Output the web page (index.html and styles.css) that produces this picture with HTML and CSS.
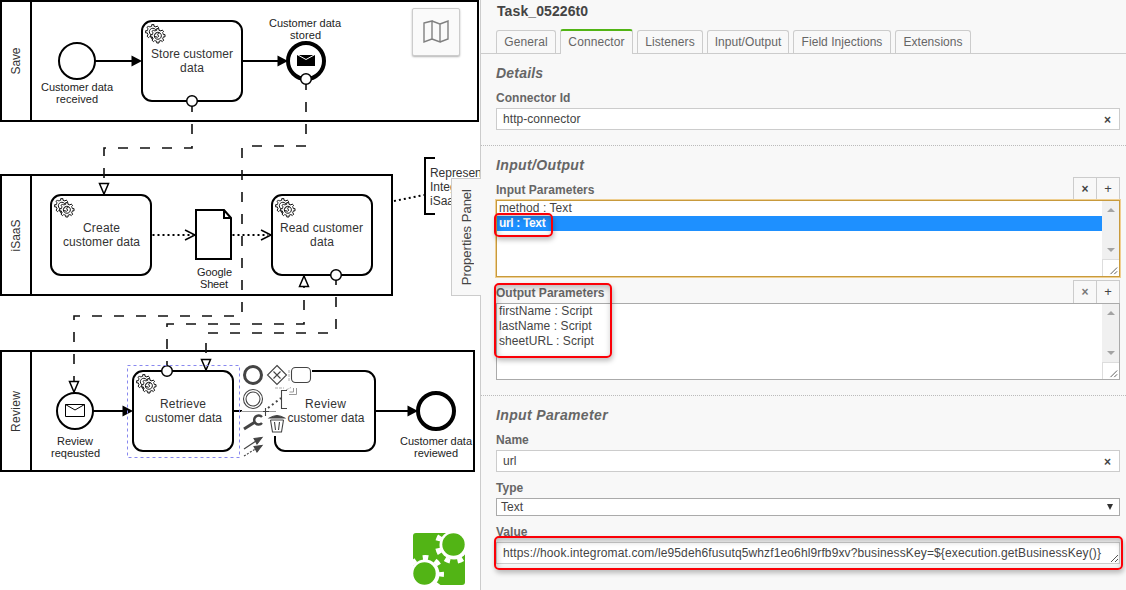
FILE: index.html
```html
<!DOCTYPE html>
<html lang="en">
<head>
<meta charset="utf-8">
<title>Process modeler</title>
<link rel="stylesheet" href="styles.css">
</head>
<body>
<main class="modeler">
<section class="canvas">
<svg class="diagram" width="480" height="590" viewBox="0 0 480 590">
  <defs>
    <g id="gears">
      <path class="gear" d="m 12,18 v -1.71335 c 0.352326,-0.0705 0.703932,-0.17838 1.047628,-0.32133 0.344416,-0.14465 0.665822,-0.32133 0.966377,-0.52145 l 1.19431,1.18005 1.567487,-1.57688 -1.195028,-1.18014 c 0.403376,-0.61394 0.683079,-1.29908 0.825447,-2.01824 l 1.622133,-0.01 v -2.2196 l -1.636514,0.01 c -0.07333,-0.35153 -0.178319,-0.70024 -0.323564,-1.04372 -0.145244,-0.34406 -0.321407,-0.6644 -0.522735,-0.96217 l 1.131035,-1.13631 -1.583305,-1.56293 -1.129598,1.13589 c -0.614052,-0.40108 -1.302883,-0.68093 -2.022633,-0.82247 l 0.0093,-1.61852 h -2.241173 l 0.0042,1.63124 c -0.353763,0.0736 -0.705369,0.17977 -1.049785,0.32371 -0.344415,0.14437 -0.665102,0.32092 -0.9635006,0.52006 l -1.1698628,-1.15823 -1.5667691,1.5792 1.1684265,1.15669 c -0.4026573,0.61283 -0.68308,1.29797 -0.8247287,2.01713 l -1.6588041,0.003 v 2.22174 l 1.6724648,-0.006 c 0.073327,0.35077 0.1797598,0.70243 0.3242851,1.04472 0.1452428,0.34448 0.3214064,0.6644 0.5227339,0.96066 l -1.1993431,1.19723 1.5840256,1.56011 1.1964668,-1.19348 c 0.6140517,0.40346 1.3028827,0.68232 2.0233517,0.82331 l 7.19e-4,1.69892 h 2.226848 z m 0.221462,-3.9957 c -1.788948,0.7502 -3.8576,-0.0928 -4.6097055,-1.87438 -0.7521065,-1.78321 0.090598,-3.84627 1.8802645,-4.59604 1.78823,-0.74936 3.856881,0.0929 4.608987,1.87437 0.752106,1.78165 -0.0906,3.84612 -1.879546,4.59605 z"/>
      <path class="gear" d="m 17,22 v -1.71335 c 0.352326,-0.0705 0.703932,-0.17838 1.047628,-0.32133 0.344416,-0.14465 0.665822,-0.32133 0.966377,-0.52145 l 1.19431,1.18005 1.567487,-1.57688 -1.195028,-1.18014 c 0.403376,-0.61394 0.683079,-1.29908 0.825447,-2.01824 l 1.622133,-0.01 v -2.2196 l -1.636514,0.01 c -0.07333,-0.35153 -0.178319,-0.70024 -0.323564,-1.04372 -0.145244,-0.34406 -0.321407,-0.6644 -0.522735,-0.96217 l 1.131035,-1.13631 -1.583305,-1.56293 -1.129598,1.13589 c -0.614052,-0.40108 -1.302883,-0.68093 -2.022633,-0.82247 l 0.0093,-1.61852 h -2.241173 l 0.0042,1.63124 c -0.353763,0.0736 -0.705369,0.17977 -1.049785,0.32371 -0.344415,0.14437 -0.665102,0.32092 -0.9635006,0.52006 l -1.1698628,-1.15823 -1.5667691,1.5792 1.1684265,1.15669 c -0.4026573,0.61283 -0.68308,1.29797 -0.8247287,2.01713 l -1.6588041,0.003 v 2.22174 l 1.6724648,-0.006 c 0.073327,0.35077 0.1797598,0.70243 0.3242851,1.04472 0.1452428,0.34448 0.3214064,0.6644 0.5227339,0.96066 l -1.1993431,1.19723 1.5840256,1.56011 1.1964668,-1.19348 c 0.6140517,0.40346 1.3028827,0.68232 2.0233517,0.82331 l 7.19e-4,1.69892 h 2.226848 z m 0.221462,-3.9957 c -1.788948,0.7502 -3.8576,-0.0928 -4.6097055,-1.87438 -0.7521065,-1.78321 0.090598,-3.84627 1.8802645,-4.59604 1.78823,-0.74936 3.856881,0.0929 4.608987,1.87437 0.752106,1.78165 -0.0906,3.84612 -1.879546,4.59605 z"/>
    </g>
  </defs>

  <!-- pools -->
  <g class="shape">
    <path d="M1 1H478V121H1ZM31 1V121"/>
    <path d="M1 175H392V295H1ZM31 175V295"/>
    <path d="M1 351H474V471H1ZM31 351V471"/>
  </g>
  <text class="task-text" transform="translate(20 61) rotate(-90)" textLength="27">Save</text>
  <text class="task-text" transform="translate(20 235.500) rotate(-90)" textLength="32">iSaaS</text>
  <text class="task-text" transform="translate(20 411.500) rotate(-90)" textLength="41">Review</text>

  <!-- tasks -->
  <g class="shape">
    <rect x="142" y="21" width="100" height="80" rx="10"/>
    <rect x="51" y="195" width="100" height="80" rx="10"/>
    <rect x="272" y="195" width="100" height="80" rx="10"/>
    <rect x="133" y="371" width="100" height="80" rx="10"/>
    <path d="M312 371H365a10 10 0 0 1 10 10V441a10 10 0 0 1 -10 10H285a10 10 0 0 1 -10 -10V436"/>
  </g>
  <use href="#gears" x="142" y="21"/>
  <use href="#gears" x="51" y="195"/>
  <use href="#gears" x="272" y="195"/>
  <use href="#gears" x="133" y="371"/>
  <g class="task-text">
    <text x="192" y="58" textLength="82">Store customer</text><text x="192" y="72" textLength="24">data</text>
    <text x="101.500" y="232" textLength="37">Create</text><text x="101.500" y="246" textLength="77">customer data</text>
    <text x="321.500" y="232" textLength="83">Read customer</text><text x="322" y="246" textLength="24">data</text>
    <text x="183" y="408" textLength="46">Retrieve</text><text x="183.500" y="422" textLength="77">customer data</text>
    <text x="325.500" y="408" textLength="41">Review</text><text x="326" y="422" textLength="77">customer data</text>
  </g>

  <!-- events -->
  <g class="shape">
    <circle cx="77" cy="61" r="18"/>
    <circle class="end" cx="306" cy="61" r="18"/>
    <circle cx="75" cy="411" r="18"/>
    <circle class="end" cx="436" cy="411" r="18"/>
  </g>
  <path d="M297 55H315V66H297Z"/>
  <path class="white-line" d="M297 54.500L306 59.500L315 54.500"/>
  <path class="thin" d="M65.500 404.500H84.500V416.500H65.500ZM65.500 404.500L75 410L84.500 404.500"/>
  <g class="label-text">
    <text x="77" y="91" textLength="72">Customer data</text><text x="77" y="103" textLength="42">received</text>
    <text x="305" y="27" textLength="72">Customer data</text><text x="305.500" y="39" textLength="31">stored</text>
    <text x="214.500" y="276" textLength="35">Google</text><text x="214" y="288" textLength="28">Sheet</text>
    <text x="75" y="445" textLength="36">Review</text><text x="75.500" y="457" textLength="49">reqeusted</text>
    <text x="436" y="445" textLength="72">Customer data</text><text x="436" y="457" textLength="44">reviewed</text>
  </g>

  <!-- sequence flows -->
  <path class="flow" d="M95 61H134M243 61H280M93 411H125M234 411H242M375 411H410"/>
  <path d="M131.500 55.500L142 61L131.500 66.500ZM277.500 55.500L288 61L277.500 66.500ZM122.500 405.500L133 411L122.500 416.500ZM407.500 405.500L418 411L407.500 416.500Z"/>

  <!-- data object and associations -->
  <path class="shape" d="M196 210H224L231 218V259H196ZM224 210V218H231"/>
  <path class="dotted" d="M152.500 235H193M232.500 235H268M394 201L424 195"/>
  <path class="flow arrow" d="M185 230L195 235L185 240M261 230L271 235L261 240"/>
  <path class="shape open" d="M435 158H425V214H435"/>
  <g class="task-text note">
    <text x="430" y="177" textLength="61">Represents</text><text x="430" y="191">Integromat</text><text x="430" y="205">iSaaS</text>
  </g>

  <!-- message flows -->
  <g class="message">
    <path d="M192 102V148H104V185"/>
    <path d="M306 80V146H242V316H74V381"/>
    <path d="M167 371V324H304V286"/>
    <path d="M336 275V333H206V360"/>
  </g>
  <g class="thin marker">
    <path d="M99.500 183.500H108.500L104 194ZM69.500 381.500H78.500L74 392ZM201.500 359.500H210.500L206 370ZM299.500 286.500H308.500L304 276Z"/>
    <circle cx="192" cy="101" r="5.300"/><circle cx="306" cy="79" r="5.300"/>
    <circle cx="167" cy="371" r="5.300"/><circle cx="336" cy="275" r="5.300"/>
  </g>
  <rect class="selection" x="127.500" y="365.500" width="112" height="92"/>

  <!-- context pad -->
  <g class="pad">
    <circle class="heavy" cx="253" cy="375" r="8.500"/>
    <circle cx="253" cy="399" r="9.500"/><circle cx="253" cy="399" r="7"/>
    <path d="M277 365.500L286.500 375L277 384.500L267.500 375ZM273.500 371.500L280.500 378.500M280.500 371.500L273.500 378.500"/>
    <rect x="291.500" y="367.500" width="19" height="15" rx="4"/>
    <path class="faint stub" d="M289 370V381M275 388H284M286 390L291 387.500"/>
    <path class="faint" d="M289 394.500H296.500V388M289.500 392H293.500V388"/>
    <path d="M287 390.500H281.500V408.500H287"/>
    <path class="pad-dots" d="M268 408L281 398"/>
    <path class="faint" d="M241 411.500H276"/><path d="M263 411.500H269M265.500 408V416"/>
    <path class="wrench" d="M244 429L255 422"/>
    <path class="wrench-head" d="M262 417A4.500 4.500 0 1 0 262 423"/>
    <path class="trash-lid" d="M269.500 418Q277 413 284.500 418Z"/>
    <path d="M270.500 420H283.500M270.500 420L272.500 432H281.500L283.500 420M274.500 422L275.500 430M279.500 422L278.500 430"/>
    <path d="M244 449L256 441"/><path class="dash" d="M244 456L257 448"/>
    <path class="solid" d="M254 438.500L262 437.500L257 444ZM254 446.500L262 445.500L257 452Z"/>
  </g>

  <!-- product mark -->
  <rect class="green" x="413" y="533" width="52" height="52" rx="3"/>
  <path class="white" d="M454 532H466V545H454ZM412 574H425V586H412Z"/>
  <circle class="white" cx="454" cy="545" r="14.500"/><circle class="white" cx="425" cy="574" r="14.500"/>
  <circle class="teeth" cx="454" cy="545" r="16.500" transform="rotate(22.500 454 545)"/>
  <circle class="teeth" cx="425" cy="574" r="16.500"/>
  <circle class="green" cx="453.500" cy="544.500" r="11.200"/><circle class="green" cx="424.500" cy="573.500" r="11.200"/>
</svg>
<button class="map-toggle" aria-label="Toggle minimap">
  <svg width="28" height="26" viewBox="0 0 28 26"><path d="M2 4L10 2V20L2 23ZM10 2L18 5V23L10 20M18 5L26 2V20L18 23"/></svg>
</button>
<div class="panel-toggle"><span>Properties Panel</span></div>
</section>

<aside class="panel">
  <h1 class="title">Task_05226t0</h1>
  <nav class="tabs">
    <a class="tab general">General</a><a class="tab connector active">Connector</a><a class="tab listeners">Listeners</a><a class="tab io">Input/Output</a><a class="tab fields">Field Injections</a><a class="tab extensions">Extensions</a>
  </nav>

  <section class="group details">
    <h2>Details</h2>
    <label>Connector Id</label>
    <div class="field"><span>http-connector</span><b class="clear">×</b></div>
  </section>

  <section class="group params">
    <h2>Input/Output</h2>
    <div class="list-head"><label>Input Parameters</label><div class="buttons"><b>×</b><b class="plus">+</b></div></div>
    <div class="list focused">
      <ul><li>method : Text</li><li class="selected">url : Text</li></ul>
      <div class="scroll"><i class="up"></i><i class="down"></i><svg class="grip" width="17" height="17" viewBox="0 0 17 17"><path d="M8 15L15 8M12 15L15 12"/></svg></div>
    </div>
    <div class="list-head second"><label>Output Parameters</label><div class="buttons"><b class="muted">×</b><b class="plus">+</b></div></div>
    <div class="list">
      <ul><li>firstName : Script</li><li>lastName : Script</li><li>sheetURL : Script</li></ul>
      <div class="scroll"><i class="up"></i><i class="down"></i><svg class="grip" width="17" height="17" viewBox="0 0 17 17"><path d="M8 15L15 8M12 15L15 12"/></svg></div>
    </div>
  </section>

  <section class="group parameter">
    <h2>Input Parameter</h2>
    <label>Name</label>
    <div class="field"><span>url</span><b class="clear">×</b></div>
    <label>Type</label>
    <div class="field select"><span>Text</span><i class="caret"></i></div>
    <label>Value</label>
    <div class="field value"><span>https://hook.integromat.com/le95deh6fusutq5whzf1eo6hl9rfb9xv?businessKey=${execution.getBusinessKey()}</span><svg class="grip" width="10" height="10" viewBox="0 0 10 10"><path d="M2 9L9 2M6 9L9 6"/></svg></div>
  </section>
  <div class="mark mark-url"></div>
  <div class="mark mark-output"></div>
  <div class="mark mark-value"></div>
</aside>
</main>
</body>
</html>
```
FILE: styles.css
```css
* { box-sizing: border-box; }
body { margin: 0; font: 12px/14px "Liberation Sans", Arial, sans-serif; color: #444; background: #fff; overflow: hidden; }
.modeler { display: flex; width: 1126px; height: 590px; }

.canvas { position: relative; width: 480px; flex: none; }
.diagram { display: block; }
.shape { fill: #fff; stroke: #000; stroke-width: 2; }
.shape .end { stroke-width: 4; }
.open { fill: none; }
.gear { fill: #fff; stroke: #111; stroke-width: 1; }
.thin { fill: #fff; stroke: #000; stroke-width: 1; }
.marker { stroke-width: 1.5; }
.white-line { fill: none; stroke: #fff; stroke-width: 1; }
.flow { fill: none; stroke: #000; stroke-width: 2; }
.arrow { stroke-width: 1.5; }
.dotted { fill: none; stroke: #000; stroke-width: 2; stroke-dasharray: 2 3; }
.message { fill: none; stroke: #111; stroke-width: 1.6; stroke-dasharray: 10 12; }
.task-text { font-size: 12px; text-anchor: middle; fill: #333; }
.label-text { font-size: 11px; text-anchor: middle; fill: #222; }
.note { text-anchor: start; }
.selection { fill: none; stroke: #8888ef; stroke-width: 1; stroke-dasharray: 3 3; }
.pad { fill: none; stroke: #444; stroke-width: 1.1; }
.pad .heavy { stroke-width: 3; }
.pad .faint { stroke: #999; stroke-width: 1; }
.pad .stub { stroke: #aaa; stroke-dasharray: 3 1; }
.pad .pad-dots { stroke-width: 2; stroke-dasharray: 2 3; }
.pad .wrench { stroke-width: 3; }
.pad .wrench-head { stroke-width: 2.5; }
.pad .trash-lid, .pad .solid { fill: #444; }
.pad .dash { stroke-dasharray: 2 1.5; }
.green { fill: #52b415; }
.white { fill: #fff; }
.teeth { fill: none; stroke: #fff; stroke-width: 5; stroke-dasharray: 5.6 7.359; stroke-dashoffset: 2.8; }

.map-toggle { position: absolute; left: 412px; top: 8px; width: 48px; height: 48px; padding: 2px 0 0 0; border: 1px solid #ccc; border-radius: 2px; background: #fafafa; box-shadow: 0 1px 2px rgba(0,0,0,.3); }
.map-toggle svg { fill: none; stroke: #808080; stroke-width: 1.4; }
.panel-toggle { position: absolute; left: 451px; top: 178px; width: 30px; height: 118px; display: flex; align-items: center; justify-content: center; background: #f8f8f8; border: 1px solid #ccc; border-right: 0; z-index: 2; }
.panel-toggle span { writing-mode: vertical-rl; transform: rotate(180deg); font-size: 13px; white-space: nowrap; }

.panel { position: relative; width: 646px; height: 590px; background: #f8f8f8; border-left: 1px solid #ccc; display: flex; flex-direction: column; }
.title { margin: 0; padding: 3px 0 0 16px; height: 29px; font-size: 14px; line-height: 16px; letter-spacing: .1px; }
.tabs { display: flex; align-items: flex-end; gap: 4px; height: 25px; padding-left: 15px; border-bottom: 1px solid #ccc; }
.tab { height: 23px; border: 1px solid #ccc; border-bottom: 0; border-radius: 3px 3px 0 0; text-align: center; line-height: 22px; color: #666; white-space: nowrap; }
.tab.active { height: 25px; margin-bottom: -1px; border-top: 2px solid #52b415; background: #f8f8f8; }
.general { width: 60px; letter-spacing: .1px; }
.connector { width: 73px; letter-spacing: .1px; }
.listeners { width: 66px; letter-spacing: .1px; }
.io { width: 82px; letter-spacing: .05px; }
.fields { width: 98px; letter-spacing: .05px; }
.extensions { width: 76px; letter-spacing: .05px; }

.group { display: flex; flex-direction: column; padding: 11px 6px 0 15px; border-bottom: 1px dotted #bbb; }
.group:last-of-type { border-bottom: 0; }
.details { height: 92px; }
.params { height: 250px; }
.parameter { height: 194px; }
h2 { margin: 0 0 10px; font: italic bold 14px/16px "Liberation Sans", Arial, sans-serif; color: #666; letter-spacing: .36px; }
.details h2 { letter-spacing: .2px; }
label { display: block; font-weight: bold; color: #666; letter-spacing: .03px; }
.field { display: flex; justify-content: space-between; align-items: center; height: 22px; margin: 3px 0 9px; padding: 0 8px 0 6px; background: #fff; border: 1px solid #ccc; }
.field span { letter-spacing: .06px; white-space: nowrap; }
.clear { padding-top: 1px; }
.parameter .select { height: 18px; padding: 0 6px 0 4px; border-color: #aaa; }
.caret { border: 3px solid transparent; border-top: 6px solid #333; border-bottom: 0; }
.value { position: relative; }
.value span { letter-spacing: .125px; }
.value .grip { position: absolute; right: 0; bottom: 0; }
.list-head { display: flex; justify-content: space-between; align-items: flex-end; height: 23px; }
.params h2 { margin-bottom: 4px; }
.params .list-head label { padding-bottom: 3px; }
.second { margin-top: 3px; }
.buttons { display: flex; width: 47px; height: 23px; border: 1px solid #ccc; border-bottom: 0; }
.buttons b { flex: 1; text-align: center; line-height: 22px; }
.buttons b + b { border-left: 1px solid #ccc; }
.buttons .plus { font-weight: normal; font-size: 13px; line-height: 21px; }
.buttons .muted { color: #777; }
.list { display: flex; height: 77px; background: #fff; border: 1px solid #aaa; }
.focused { border-color: #c89a3c; box-shadow: 0 0 0 1px #efcf91; }
.list ul { flex: 1; margin: 0; padding: 0; list-style: none; }
.list li { height: 15px; line-height: 15px; padding-left: 2px; letter-spacing: .08px; }
.list .selected { color: #fff; background: #1e90ff; font-weight: bold; letter-spacing: -.35px; }
.scroll { display: flex; flex-direction: column; align-items: center; width: 17px; background: #f0f0f0; }
.up { margin-top: 7px; border: 4px solid transparent; border-bottom-color: #a3a3a3; border-top: 0; }
.down { margin-top: 36px; border: 4px solid transparent; border-top-color: #a3a3a3; border-bottom: 0; }
.scroll .grip { margin-top: auto; background: #fff; border: 1px solid #ddd; border-right: 0; border-bottom: 0; }
.grip path { stroke: #555; stroke-width: 1; fill: none; }
.mark { position: absolute; border: 2px solid #fb0007; border-radius: 5px; box-shadow: 1px 3px 5px rgba(0,0,0,.25), inset 1px 3px 6px rgba(0,0,0,.25); }
.mark-url { left: 13px; top: 213px; width: 59px; height: 24px; }
.mark-output { left: 13px; top: 283px; width: 118px; height: 75px; }
.mark-value { left: 13px; top: 536px; width: 629px; height: 34px; }
```
